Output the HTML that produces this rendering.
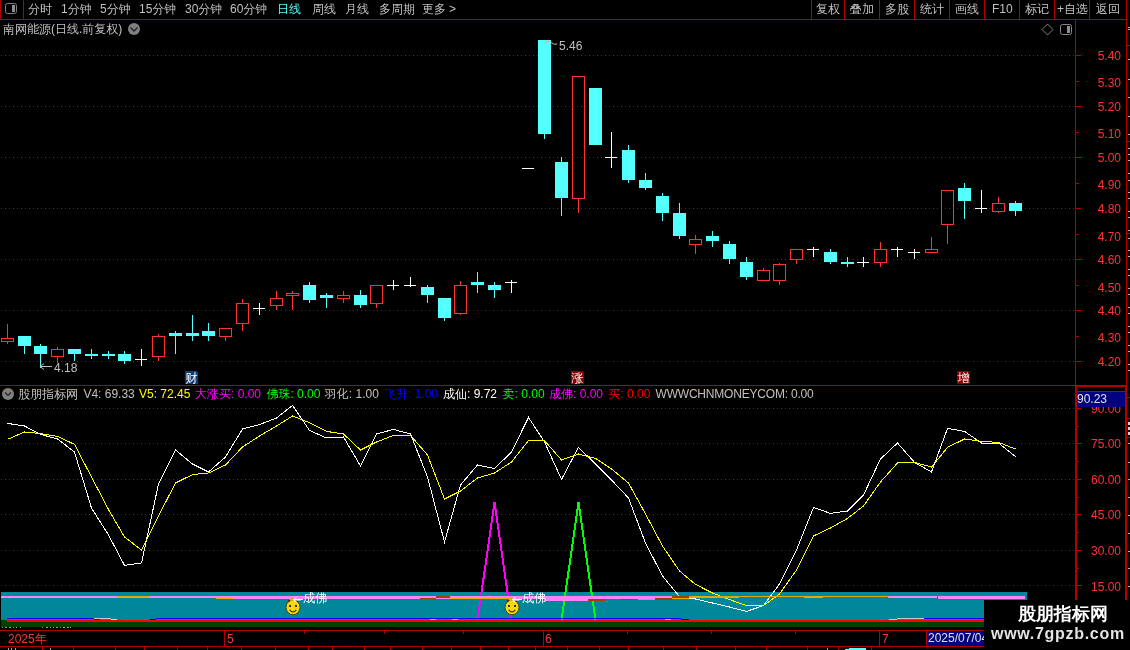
<!DOCTYPE html>
<html><head><meta charset="utf-8"><title>南网能源</title>
<style>
html,body{margin:0;padding:0;background:#000;}
body{width:1130px;height:650px;overflow:hidden;position:relative;font-family:"Liberation Sans","WenQuanYi Zen Hei Sharp","WenQuanYi Zen Hei","Noto Sans CJK SC",sans-serif;}
.ov{position:absolute;left:0;top:0;}
.t,.n{position:absolute;white-space:nowrap;line-height:14px;height:14px;}
.n{font-family:"Liberation Sans",sans-serif;}
</style></head><body>
<svg class="ov" width="1130" height="650" viewBox="0 0 1130 650" shape-rendering="crispEdges">
<line x1="1" y1="55.5" x2="1074" y2="55.5" stroke="#b00000" stroke-width="1" stroke-dasharray="1 3"/>
<line x1="1" y1="106.5" x2="1074" y2="106.5" stroke="#b00000" stroke-width="1" stroke-dasharray="1 3"/>
<line x1="1" y1="157.5" x2="1074" y2="157.5" stroke="#b00000" stroke-width="1" stroke-dasharray="1 3"/>
<line x1="1" y1="208.5" x2="1074" y2="208.5" stroke="#b00000" stroke-width="1" stroke-dasharray="1 3"/>
<line x1="1" y1="259.5" x2="1074" y2="259.5" stroke="#b00000" stroke-width="1" stroke-dasharray="1 3"/>
<line x1="1" y1="310.5" x2="1074" y2="310.5" stroke="#b00000" stroke-width="1" stroke-dasharray="1 3"/>
<line x1="1" y1="361.5" x2="1074" y2="361.5" stroke="#b00000" stroke-width="1" stroke-dasharray="1 3"/>
<line x1="1" y1="408.5" x2="1074" y2="408.5" stroke="#b00000" stroke-width="1" stroke-dasharray="1 3"/>
<line x1="1" y1="443.5" x2="1074" y2="443.5" stroke="#b00000" stroke-width="1" stroke-dasharray="1 3"/>
<line x1="1" y1="479.5" x2="1074" y2="479.5" stroke="#b00000" stroke-width="1" stroke-dasharray="1 3"/>
<line x1="1" y1="514.5" x2="1074" y2="514.5" stroke="#b00000" stroke-width="1" stroke-dasharray="1 3"/>
<line x1="1" y1="550.5" x2="1074" y2="550.5" stroke="#b00000" stroke-width="1" stroke-dasharray="1 3"/>
<line x1="1" y1="585.5" x2="1074" y2="585.5" stroke="#b00000" stroke-width="1" stroke-dasharray="1 3"/>
<rect x="1.5" y="338.5" width="12" height="3" fill="none" stroke="#ff3232" stroke-width="1"/>
<rect x="7" y="324" width="1" height="14" fill="#ff3232"/>
<rect x="7" y="342" width="1" height="2" fill="#ff3232"/>
<rect x="18" y="336" width="13" height="10" fill="#54ffff"/>
<rect x="24" y="346" width="1" height="8" fill="#54ffff"/>
<rect x="34" y="346" width="13" height="8" fill="#54ffff"/>
<rect x="40" y="344" width="1" height="2" fill="#54ffff"/>
<rect x="40" y="354" width="1" height="14" fill="#54ffff"/>
<rect x="51.5" y="349.5" width="12" height="7" fill="none" stroke="#ff3232" stroke-width="1"/>
<rect x="57" y="347" width="1" height="2" fill="#ff3232"/>
<rect x="57" y="357" width="1" height="6" fill="#ff3232"/>
<rect x="68" y="349" width="13" height="5" fill="#54ffff"/>
<rect x="74" y="354" width="1" height="7" fill="#54ffff"/>
<rect x="85" y="354" width="13" height="2" fill="#54ffff"/>
<rect x="91" y="349" width="1" height="10" fill="#54ffff"/>
<rect x="102" y="354" width="13" height="2" fill="#54ffff"/>
<rect x="108" y="351" width="1" height="8" fill="#54ffff"/>
<rect x="118" y="354" width="13" height="7" fill="#54ffff"/>
<rect x="124" y="351" width="1" height="3" fill="#54ffff"/>
<rect x="124" y="361" width="1" height="3" fill="#54ffff"/>
<rect x="135" y="359" width="12" height="1" fill="#fff"/>
<rect x="141" y="349" width="1" height="17" fill="#fff"/>
<rect x="152.5" y="336.5" width="12" height="20" fill="none" stroke="#ff3232" stroke-width="1"/>
<rect x="158" y="334" width="1" height="2" fill="#ff3232"/>
<rect x="158" y="357" width="1" height="4" fill="#ff3232"/>
<rect x="169" y="333" width="13" height="3" fill="#54ffff"/>
<rect x="175" y="331" width="1" height="2" fill="#54ffff"/>
<rect x="175" y="336" width="1" height="18" fill="#54ffff"/>
<rect x="186" y="333" width="13" height="3" fill="#54ffff"/>
<rect x="192" y="315" width="1" height="18" fill="#54ffff"/>
<rect x="192" y="336" width="1" height="5" fill="#54ffff"/>
<rect x="202" y="331" width="13" height="5" fill="#54ffff"/>
<rect x="208" y="323" width="1" height="8" fill="#54ffff"/>
<rect x="208" y="336" width="1" height="5" fill="#54ffff"/>
<rect x="219.5" y="328.5" width="12" height="8" fill="none" stroke="#ff3232" stroke-width="1"/>
<rect x="225" y="337" width="1" height="4" fill="#ff3232"/>
<rect x="236.5" y="303.5" width="12" height="20" fill="none" stroke="#ff3232" stroke-width="1"/>
<rect x="242" y="299" width="1" height="4" fill="#ff3232"/>
<rect x="242" y="324" width="1" height="7" fill="#ff3232"/>
<rect x="253" y="308" width="12" height="1" fill="#fff"/>
<rect x="259" y="303" width="1" height="12" fill="#fff"/>
<rect x="270.5" y="298.5" width="12" height="7" fill="none" stroke="#ff3232" stroke-width="1"/>
<rect x="276" y="291" width="1" height="7" fill="#ff3232"/>
<rect x="276" y="306" width="1" height="4" fill="#ff3232"/>
<rect x="286.5" y="293.5" width="12" height="2" fill="none" stroke="#ff3232" stroke-width="1"/>
<rect x="292" y="291" width="1" height="2" fill="#ff3232"/>
<rect x="292" y="296" width="1" height="14" fill="#ff3232"/>
<rect x="303" y="285" width="13" height="15" fill="#54ffff"/>
<rect x="309" y="282" width="1" height="3" fill="#54ffff"/>
<rect x="309" y="300" width="1" height="3" fill="#54ffff"/>
<rect x="320" y="295" width="13" height="3" fill="#54ffff"/>
<rect x="326" y="293" width="1" height="2" fill="#54ffff"/>
<rect x="326" y="298" width="1" height="10" fill="#54ffff"/>
<rect x="337.5" y="295.5" width="12" height="3" fill="none" stroke="#ff3232" stroke-width="1"/>
<rect x="343" y="291" width="1" height="4" fill="#ff3232"/>
<rect x="343" y="299" width="1" height="4" fill="#ff3232"/>
<rect x="354" y="295" width="13" height="10" fill="#54ffff"/>
<rect x="360" y="290" width="1" height="5" fill="#54ffff"/>
<rect x="360" y="305" width="1" height="3" fill="#54ffff"/>
<rect x="370.5" y="285.5" width="12" height="18" fill="none" stroke="#ff3232" stroke-width="1"/>
<rect x="376" y="304" width="1" height="4" fill="#ff3232"/>
<rect x="387" y="285" width="12" height="1" fill="#fff"/>
<rect x="393" y="280" width="1" height="10" fill="#fff"/>
<rect x="404" y="285" width="12" height="1" fill="#fff"/>
<rect x="410" y="277" width="1" height="10" fill="#fff"/>
<rect x="421" y="287" width="13" height="8" fill="#54ffff"/>
<rect x="427" y="285" width="1" height="2" fill="#54ffff"/>
<rect x="427" y="295" width="1" height="8" fill="#54ffff"/>
<rect x="438" y="298" width="13" height="20" fill="#54ffff"/>
<rect x="444" y="318" width="1" height="3" fill="#54ffff"/>
<rect x="454.5" y="285.5" width="12" height="28" fill="none" stroke="#ff3232" stroke-width="1"/>
<rect x="460" y="281" width="1" height="4" fill="#ff3232"/>
<rect x="460" y="314" width="1" height="1" fill="#ff3232"/>
<rect x="471" y="282" width="13" height="3" fill="#54ffff"/>
<rect x="477" y="272" width="1" height="10" fill="#54ffff"/>
<rect x="477" y="285" width="1" height="8" fill="#54ffff"/>
<rect x="488" y="285" width="13" height="5" fill="#54ffff"/>
<rect x="494" y="282" width="1" height="3" fill="#54ffff"/>
<rect x="494" y="290" width="1" height="8" fill="#54ffff"/>
<rect x="505" y="282" width="12" height="1" fill="#fff"/>
<rect x="511" y="280" width="1" height="13" fill="#fff"/>
<rect x="522" y="168" width="12" height="1" fill="#fff"/>
<rect x="538" y="40" width="13" height="94" fill="#54ffff"/>
<rect x="544" y="134" width="1" height="5" fill="#54ffff"/>
<rect x="555" y="162" width="13" height="36" fill="#54ffff"/>
<rect x="561" y="157" width="1" height="5" fill="#54ffff"/>
<rect x="561" y="198" width="1" height="18" fill="#54ffff"/>
<rect x="572.5" y="76.5" width="12" height="122" fill="none" stroke="#ff3232" stroke-width="1"/>
<rect x="578" y="199" width="1" height="14" fill="#ff3232"/>
<rect x="589" y="88" width="13" height="57" fill="#54ffff"/>
<rect x="605" y="157" width="12" height="1" fill="#fff"/>
<rect x="611" y="132" width="1" height="36" fill="#fff"/>
<rect x="622" y="150" width="13" height="30" fill="#54ffff"/>
<rect x="628" y="145" width="1" height="5" fill="#54ffff"/>
<rect x="628" y="180" width="1" height="3" fill="#54ffff"/>
<rect x="639" y="180" width="13" height="8" fill="#54ffff"/>
<rect x="645" y="173" width="1" height="7" fill="#54ffff"/>
<rect x="645" y="188" width="1" height="2" fill="#54ffff"/>
<rect x="656" y="196" width="13" height="17" fill="#54ffff"/>
<rect x="662" y="193" width="1" height="3" fill="#54ffff"/>
<rect x="662" y="213" width="1" height="8" fill="#54ffff"/>
<rect x="673" y="213" width="13" height="23" fill="#54ffff"/>
<rect x="679" y="203" width="1" height="10" fill="#54ffff"/>
<rect x="679" y="236" width="1" height="3" fill="#54ffff"/>
<rect x="689.5" y="239.5" width="12" height="5" fill="none" stroke="#ff3232" stroke-width="1"/>
<rect x="695" y="235" width="1" height="4" fill="#ff3232"/>
<rect x="695" y="245" width="1" height="9" fill="#ff3232"/>
<rect x="706" y="236" width="13" height="5" fill="#54ffff"/>
<rect x="712" y="231" width="1" height="5" fill="#54ffff"/>
<rect x="712" y="241" width="1" height="6" fill="#54ffff"/>
<rect x="723" y="244" width="13" height="15" fill="#54ffff"/>
<rect x="729" y="241" width="1" height="3" fill="#54ffff"/>
<rect x="729" y="259" width="1" height="5" fill="#54ffff"/>
<rect x="740" y="262" width="13" height="15" fill="#54ffff"/>
<rect x="746" y="257" width="1" height="5" fill="#54ffff"/>
<rect x="746" y="277" width="1" height="3" fill="#54ffff"/>
<rect x="757.5" y="270.5" width="12" height="10" fill="none" stroke="#ff3232" stroke-width="1"/>
<rect x="763" y="268" width="1" height="2" fill="#ff3232"/>
<rect x="773.5" y="264.5" width="12" height="16" fill="none" stroke="#ff3232" stroke-width="1"/>
<rect x="779" y="263" width="1" height="1" fill="#ff3232"/>
<rect x="779" y="281" width="1" height="4" fill="#ff3232"/>
<rect x="790.5" y="249.5" width="12" height="10" fill="none" stroke="#ff3232" stroke-width="1"/>
<rect x="796" y="260" width="1" height="4" fill="#ff3232"/>
<rect x="807" y="249" width="12" height="1" fill="#fff"/>
<rect x="813" y="247" width="1" height="10" fill="#fff"/>
<rect x="824" y="252" width="13" height="10" fill="#54ffff"/>
<rect x="830" y="249" width="1" height="3" fill="#54ffff"/>
<rect x="830" y="262" width="1" height="2" fill="#54ffff"/>
<rect x="841" y="262" width="13" height="2" fill="#54ffff"/>
<rect x="847" y="257" width="1" height="10" fill="#54ffff"/>
<rect x="857" y="262" width="12" height="1" fill="#fff"/>
<rect x="863" y="257" width="1" height="10" fill="#fff"/>
<rect x="874.5" y="249.5" width="12" height="13" fill="none" stroke="#ff3232" stroke-width="1"/>
<rect x="880" y="242" width="1" height="7" fill="#ff3232"/>
<rect x="880" y="263" width="1" height="4" fill="#ff3232"/>
<rect x="891" y="249" width="12" height="1" fill="#fff"/>
<rect x="897" y="247" width="1" height="10" fill="#fff"/>
<rect x="908" y="252" width="12" height="1" fill="#fff"/>
<rect x="914" y="249" width="1" height="10" fill="#fff"/>
<rect x="925.5" y="249.5" width="12" height="3" fill="none" stroke="#ff3232" stroke-width="1"/>
<rect x="931" y="237" width="1" height="12" fill="#ff3232"/>
<rect x="941.5" y="190.5" width="12" height="34" fill="none" stroke="#ff3232" stroke-width="1"/>
<rect x="947" y="225" width="1" height="19" fill="#ff3232"/>
<rect x="958" y="188" width="13" height="13" fill="#54ffff"/>
<rect x="964" y="183" width="1" height="5" fill="#54ffff"/>
<rect x="964" y="201" width="1" height="18" fill="#54ffff"/>
<rect x="975" y="208" width="12" height="1" fill="#fff"/>
<rect x="981" y="190" width="1" height="23" fill="#fff"/>
<rect x="992.5" y="203.5" width="12" height="8" fill="none" stroke="#ff3232" stroke-width="1"/>
<rect x="998" y="197" width="1" height="6" fill="#ff3232"/>
<rect x="998" y="212" width="1" height="1" fill="#ff3232"/>
<rect x="1009" y="203" width="13" height="8" fill="#54ffff"/>
<rect x="1015" y="201" width="1" height="2" fill="#54ffff"/>
<rect x="1015" y="211" width="1" height="5" fill="#54ffff"/>
<rect x="1" y="592" width="1026" height="28" fill="#00889a"/>
<rect x="1" y="622" width="1075" height="5" fill="#004000"/>
<polyline points="7.5,423.4 24.5,426.0 40.5,434.4 57.5,439.0 74.5,452.0 91.5,508.0 108.5,535.0 124.5,565.4 141.5,563.0 158.5,484.0 175.5,450.0 192.5,464.0 208.5,472.0 225.5,457.0 242.5,429.0 259.5,424.6 276.5,418.0 292.5,405.4 309.5,430.4 326.5,438.0 343.5,437.0 360.5,466.0 376.5,434.0 393.5,429.4 410.5,434.0 427.5,477.0 444.5,542.0 460.5,485.0 477.5,465.0 494.5,468.6 511.5,452.0 528.5,417.4 544.5,442.0 561.5,479.4 578.5,447.4 595.5,464.0 611.5,480.0 628.5,498.0 645.5,543.0 662.5,576.0 679.5,596.6 695.5,599.0 712.5,603.0 729.5,607.0 746.5,611.4 763.5,605.6 779.5,584.0 796.5,550.0 813.5,507.4 830.5,513.4 847.5,511.0 863.5,495.0 880.5,459.0 897.5,443.0 914.5,462.4 931.5,472.0 947.5,428.4 964.5,431.4 981.5,443.0 998.5,443.0 1015.5,456.6" fill="none" stroke="#ffffff" stroke-width="1"/>
<polyline points="7.5,439.4 24.5,432.0 40.5,433.6 57.5,436.4 74.5,444.4 91.5,477.0 108.5,509.5 124.5,537.0 141.5,550.0 158.5,516.0 175.5,483.0 192.5,474.6 208.5,473.0 225.5,465.0 242.5,447.0 259.5,436.0 276.5,426.0 292.5,416.0 309.5,422.6 326.5,431.4 343.5,434.0 360.5,450.0 376.5,442.0 393.5,435.4 410.5,435.4 427.5,455.0 444.5,499.0 460.5,491.0 477.5,478.0 494.5,473.0 511.5,462.0 528.5,440.6 544.5,440.6 561.5,460.0 578.5,454.0 595.5,458.4 611.5,469.0 628.5,483.0 645.5,514.0 662.5,546.0 679.5,571.0 695.5,584.4 712.5,593.0 729.5,599.6 746.5,605.6 763.5,605.6 779.5,594.0 796.5,570.0 813.5,536.0 830.5,528.0 847.5,518.4 863.5,506.0 880.5,482.0 897.5,463.0 914.5,462.4 931.5,467.0 947.5,447.4 964.5,439.0 981.5,441.4 998.5,442.4 1015.5,449.0" fill="none" stroke="#ffff00" stroke-width="1"/>
<polyline points="477.5,620 494.5,502.5 511.5,620" fill="none" stroke="#ff00ff" stroke-width="2"/>
<polyline points="561.5,620 578.5,502.5 595.5,620" fill="none" stroke="#00ff00" stroke-width="2"/>
<rect x="1" y="596" width="215" height="2" fill="#ff80ff"/>
<rect x="216" y="596" width="456" height="3" fill="#ff80ff"/>
<rect x="117" y="596" width="32" height="2" fill="#e6a800"/>
<rect x="216" y="598" width="17" height="1" fill="#e6a800"/>
<rect x="420" y="598" width="16" height="1" fill="#a04000"/>
<rect x="436" y="596" width="14" height="2" fill="#a04000"/>
<rect x="450" y="598" width="60" height="1" fill="#e6a800"/>
<rect x="545" y="596" width="24" height="5" fill="#ff80ff"/>
<rect x="569" y="599" width="19" height="2" fill="#ff80ff"/>
<rect x="588" y="599" width="17" height="2" fill="#a04000"/>
<rect x="621" y="599" width="17" height="1" fill="#a04000"/>
<rect x="638" y="599" width="17" height="1" fill="#e6a800"/>
<rect x="655" y="598" width="17" height="2" fill="#a04000"/>
<rect x="672" y="596" width="17" height="2" fill="#a04000"/>
<rect x="672" y="598" width="17" height="1" fill="#e6a800"/>
<rect x="689" y="596" width="50" height="2" fill="#e6a800"/>
<rect x="739" y="596" width="149" height="1" fill="#e6a800"/>
<rect x="804" y="596" width="19" height="2" fill="#e6a800"/>
<rect x="888" y="596" width="49" height="2" fill="#ff80ff"/>
<rect x="938" y="596" width="87" height="3" fill="#ff80ff"/>
<rect x="7" y="618" width="87" height="1" fill="#0000ff"/>
<rect x="156" y="618" width="525" height="1" fill="#0000ff"/>
<rect x="681" y="619" width="8" height="1" fill="#0000ff"/>
<rect x="94" y="618" width="17" height="1" fill="#c8c8c8"/>
<rect x="94" y="619" width="6" height="1" fill="#0000ff"/>
<rect x="111" y="619" width="6" height="1" fill="#ffc8e8"/>
<rect x="150" y="619" width="6" height="1" fill="#0000ff"/>
<rect x="430" y="619" width="6" height="1" fill="#ff80ff"/>
<rect x="452" y="619" width="6" height="1" fill="#ff80ff"/>
<rect x="665" y="619" width="6" height="1" fill="#ff80ff"/>
<rect x="889" y="619" width="8" height="1" fill="#c8c8c8"/>
<rect x="897" y="618" width="27" height="1" fill="#c8c8c8"/>
<rect x="924" y="618" width="60" height="1" fill="#0000ff"/>
<rect x="7" y="620" width="1069" height="2" fill="#ff0000"/>
<rect x="1" y="620" width="6" height="2" fill="#004000"/>
<rect x="0" y="19" width="1127" height="1" fill="#b00000"/>
<rect x="0" y="0" width="1" height="20" fill="#b00000"/>
<rect x="23" y="0" width="1" height="20" fill="#b00000"/>
<rect x="811" y="0" width="1" height="20" fill="#b00000"/>
<rect x="844" y="0" width="1" height="20" fill="#b00000"/>
<rect x="879" y="0" width="1" height="20" fill="#b00000"/>
<rect x="914" y="0" width="1" height="20" fill="#b00000"/>
<rect x="949" y="0" width="1" height="20" fill="#b00000"/>
<rect x="984" y="0" width="1" height="20" fill="#b00000"/>
<rect x="1019" y="0" width="1" height="20" fill="#b00000"/>
<rect x="1054" y="0" width="1" height="20" fill="#b00000"/>
<rect x="1089" y="0" width="1" height="20" fill="#b00000"/>
<rect x="1126" y="0" width="1" height="650" fill="#b00000"/>
<rect x="1075" y="20" width="1" height="365" fill="#b00000"/>
<rect x="1075" y="385" width="2" height="245" fill="#b00000"/>
<rect x="0" y="385" width="1075" height="1" fill="#b00000"/>
<rect x="1075" y="385" width="52" height="2" fill="#b00000"/>
<rect x="1077" y="391" width="48" height="1" fill="#b00000"/>
<rect x="1125" y="385" width="2" height="265" fill="#b00000"/>
<rect x="0" y="630" width="984" height="1" fill="#b00000"/>
<rect x="0" y="646" width="984" height="1" fill="#b00000"/>
<rect x="224" y="630" width="1" height="16" fill="#b00000"/>
<rect x="543" y="630" width="1" height="16" fill="#b00000"/>
<rect x="879" y="630" width="1" height="16" fill="#b00000"/>
<rect x="926" y="630" width="1" height="16" fill="#b00000"/>
<rect x="304" y="631" width="1" height="3" fill="#b00000"/>
<rect x="384" y="631" width="1" height="3" fill="#b00000"/>
<rect x="463" y="631" width="1" height="3" fill="#b00000"/>
<rect x="627" y="631" width="1" height="3" fill="#b00000"/>
<rect x="711" y="631" width="1" height="3" fill="#b00000"/>
<rect x="795" y="631" width="1" height="3" fill="#b00000"/>
<rect x="42" y="646" width="1" height="4" fill="#b00000"/>
<rect x="73" y="646" width="1" height="4" fill="#b00000"/>
<rect x="115" y="646" width="1" height="4" fill="#b00000"/>
<rect x="144" y="646" width="1" height="4" fill="#b00000"/>
<rect x="177" y="646" width="1" height="4" fill="#b00000"/>
<rect x="207" y="646" width="1" height="4" fill="#b00000"/>
<rect x="241" y="646" width="1" height="4" fill="#b00000"/>
<rect x="275" y="646" width="1" height="4" fill="#b00000"/>
<rect x="308" y="646" width="1" height="4" fill="#b00000"/>
<rect x="332" y="646" width="1" height="4" fill="#b00000"/>
<rect x="364" y="646" width="1" height="4" fill="#b00000"/>
<rect x="390" y="646" width="1" height="4" fill="#b00000"/>
<rect x="422" y="646" width="1" height="4" fill="#b00000"/>
<rect x="451" y="646" width="1" height="4" fill="#b00000"/>
<rect x="480" y="646" width="1" height="4" fill="#b00000"/>
<rect x="508" y="646" width="1" height="4" fill="#b00000"/>
<rect x="535" y="646" width="1" height="4" fill="#b00000"/>
<rect x="567" y="646" width="1" height="4" fill="#b00000"/>
<rect x="599" y="646" width="1" height="4" fill="#b00000"/>
<rect x="628" y="646" width="1" height="4" fill="#b00000"/>
<rect x="663" y="646" width="1" height="4" fill="#b00000"/>
<rect x="696" y="646" width="1" height="4" fill="#b00000"/>
<rect x="735" y="646" width="1" height="4" fill="#b00000"/>
<rect x="766" y="646" width="1" height="4" fill="#b00000"/>
<rect x="807" y="646" width="1" height="4" fill="#b00000"/>
<rect x="838" y="646" width="1" height="4" fill="#b00000"/>
<rect x="871" y="646" width="1" height="4" fill="#b00000"/>
<rect x="1076" y="55" width="5" height="1" fill="#b00000"/>
<rect x="1076" y="81" width="3" height="1" fill="#b00000"/>
<rect x="1076" y="106" width="5" height="1" fill="#b00000"/>
<rect x="1076" y="132" width="3" height="1" fill="#b00000"/>
<rect x="1076" y="157" width="5" height="1" fill="#b00000"/>
<rect x="1076" y="183" width="3" height="1" fill="#b00000"/>
<rect x="1076" y="208" width="5" height="1" fill="#b00000"/>
<rect x="1076" y="234" width="3" height="1" fill="#b00000"/>
<rect x="1076" y="259" width="5" height="1" fill="#b00000"/>
<rect x="1076" y="285" width="3" height="1" fill="#b00000"/>
<rect x="1076" y="310" width="5" height="1" fill="#b00000"/>
<rect x="1076" y="336" width="3" height="1" fill="#b00000"/>
<rect x="1076" y="361" width="5" height="1" fill="#b00000"/>
<rect x="1077" y="408" width="4" height="1" fill="#b00000"/>
<rect x="1077" y="426" width="2" height="1" fill="#b00000"/>
<rect x="1077" y="443" width="4" height="1" fill="#b00000"/>
<rect x="1077" y="461" width="2" height="1" fill="#b00000"/>
<rect x="1077" y="479" width="4" height="1" fill="#b00000"/>
<rect x="1077" y="497" width="2" height="1" fill="#b00000"/>
<rect x="1077" y="514" width="4" height="1" fill="#b00000"/>
<rect x="1077" y="532" width="2" height="1" fill="#b00000"/>
<rect x="1077" y="550" width="4" height="1" fill="#b00000"/>
<rect x="1077" y="568" width="2" height="1" fill="#b00000"/>
<rect x="1077" y="585" width="4" height="1" fill="#b00000"/>
<rect x="1077" y="603" width="2" height="1" fill="#b00000"/>
<rect x="1127" y="45" width="3" height="1" fill="#b00000"/>
<rect x="1127" y="141" width="3" height="1" fill="#b00000"/>
<rect x="1127" y="233" width="3" height="1" fill="#b00000"/>
<rect x="1127" y="397" width="3" height="1" fill="#b00000"/>
<rect x="1127" y="418" width="3" height="1" fill="#b00000"/>
<rect x="1127" y="437" width="3" height="1" fill="#b00000"/>
<rect x="1128" y="27" width="2" height="1" fill="#b0b0b0"/>
<rect x="1128" y="29" width="2" height="1" fill="#b0b0b0"/>
<rect x="1128" y="59" width="2" height="1" fill="#b0b0b0"/>
<rect x="1128" y="79" width="2" height="1" fill="#b0b0b0"/>
<rect x="1128" y="97" width="2" height="1" fill="#b0b0b0"/>
<rect x="1128" y="116" width="2" height="1" fill="#b0b0b0"/>
<rect x="1128" y="134" width="2" height="1" fill="#b0b0b0"/>
<rect x="1128" y="148" width="2" height="1" fill="#b0b0b0"/>
<rect x="1128" y="154" width="2" height="1" fill="#b0b0b0"/>
<rect x="1128" y="160" width="2" height="1" fill="#b0b0b0"/>
<rect x="1128" y="173" width="2" height="1" fill="#b0b0b0"/>
<rect x="1128" y="180" width="2" height="1" fill="#b0b0b0"/>
<rect x="1128" y="192" width="2" height="1" fill="#b0b0b0"/>
<rect x="1128" y="198" width="2" height="1" fill="#b0b0b0"/>
<rect x="1128" y="211" width="2" height="1" fill="#b0b0b0"/>
<rect x="1128" y="217" width="2" height="1" fill="#b0b0b0"/>
<rect x="1128" y="230" width="2" height="1" fill="#b0b0b0"/>
<rect x="1128" y="238" width="2" height="1" fill="#b0b0b0"/>
<rect x="1128" y="250" width="2" height="1" fill="#b0b0b0"/>
<rect x="1128" y="256" width="2" height="1" fill="#b0b0b0"/>
<rect x="1128" y="269" width="2" height="1" fill="#b0b0b0"/>
<rect x="1128" y="275" width="2" height="1" fill="#b0b0b0"/>
<rect x="1128" y="288" width="2" height="1" fill="#b0b0b0"/>
<rect x="1128" y="294" width="2" height="1" fill="#b0b0b0"/>
<rect x="1128" y="307" width="2" height="1" fill="#b0b0b0"/>
<rect x="1128" y="313" width="2" height="1" fill="#b0b0b0"/>
<rect x="1128" y="326" width="2" height="1" fill="#b0b0b0"/>
<rect x="1128" y="332" width="2" height="1" fill="#b0b0b0"/>
<rect x="1128" y="345" width="2" height="1" fill="#b0b0b0"/>
<rect x="1128" y="351" width="2" height="1" fill="#b0b0b0"/>
<rect x="1128" y="364" width="2" height="1" fill="#b0b0b0"/>
<rect x="1128" y="370" width="2" height="1" fill="#b0b0b0"/>
<rect x="1128" y="443" width="2" height="1" fill="#b0b0b0"/>
<rect x="1128" y="462" width="2" height="1" fill="#b0b0b0"/>
<rect x="1128" y="479" width="2" height="1" fill="#b0b0b0"/>
<rect x="1128" y="497" width="2" height="1" fill="#b0b0b0"/>
<rect x="1128" y="515" width="2" height="1" fill="#b0b0b0"/>
<rect x="1128" y="533" width="2" height="1" fill="#b0b0b0"/>
<rect x="1128" y="551" width="2" height="1" fill="#b0b0b0"/>
<rect x="1128" y="568" width="2" height="1" fill="#b0b0b0"/>
<rect x="1128" y="586" width="2" height="1" fill="#b0b0b0"/>
<rect x="1128" y="422" width="2" height="13" fill="#d0d0d0"/>
<rect x="1128" y="425" width="2" height="2" fill="#000"/>
<rect x="1128" y="430" width="2" height="2" fill="#000"/>
<rect x="927" y="631" width="57" height="15" fill="#000080"/>
<rect x="984" y="600" width="146" height="50" fill="#000"/>
<rect x="2" y="627" width="1" height="1" fill="#a0a0a0"/>
<rect x="5" y="627" width="2" height="1" fill="#a0a0a0"/>
<rect x="9" y="627" width="2" height="1" fill="#a0a0a0"/>
<rect x="13" y="627" width="1" height="1" fill="#a0a0a0"/>
<rect x="16" y="627" width="1" height="1" fill="#a0a0a0"/>
<rect x="20" y="627" width="1" height="1" fill="#a0a0a0"/>
<rect x="42" y="627" width="1" height="1" fill="#a0a0a0"/>
<rect x="46" y="627" width="2" height="1" fill="#a0a0a0"/>
<rect x="50" y="627" width="1" height="1" fill="#a0a0a0"/>
<rect x="53" y="627" width="1" height="1" fill="#a0a0a0"/>
<rect x="56" y="627" width="2" height="1" fill="#a0a0a0"/>
<rect x="60" y="627" width="1" height="1" fill="#a0a0a0"/>
<rect x="63" y="627" width="2" height="1" fill="#a0a0a0"/>
<rect x="67" y="627" width="2" height="1" fill="#a0a0a0"/>
<rect x="70" y="627" width="1" height="1" fill="#a0a0a0"/>
<rect x="8" y="648" width="1" height="2" fill="#a0a0a0"/>
<rect x="11" y="648" width="1" height="2" fill="#a0a0a0"/>
<rect x="15" y="648" width="1" height="2" fill="#a0a0a0"/>
<rect x="50" y="648" width="1" height="2" fill="#a0a0a0"/>
<rect x="849" y="648" width="17" height="2" fill="#54ffff"/>
<rect x="845" y="649" width="4" height="1" fill="#54ffff"/>
<rect x="827" y="648" width="1" height="2" fill="#a0a0a0"/>
</svg>

<svg class="ov" width="1130" height="650" viewBox="0 0 1130 650">
<rect x="5.5" y="3.5" width="11" height="10" rx="2" fill="none" stroke="#808080"/><rect x="12" y="5" width="3" height="7" fill="#909090"/>
<rect x="1060.5" y="24.5" width="11" height="10" rx="2" fill="none" stroke="#888"/><rect x="1067" y="26" width="3" height="7" fill="#909090"/>
<path d="M1047.5 24 L1053 29.5 L1047.5 35 L1042 29.5 Z" fill="none" stroke="#909090" stroke-width="0.9"/>
<circle cx="134" cy="29" r="6" fill="#808080"/><path d="M130.5 27.5 L134 31 L137.5 27.5" fill="none" stroke="#202020" stroke-width="1.3"/>
<circle cx="8" cy="394" r="6" fill="#808080"/><path d="M5 392.5 L8 395.5 L11 392.5" fill="none" stroke="#202020" stroke-width="1.2"/>
<path d="M40 366.5 H52 M40 366.5 l4 -3 M40 366.5 l4 3" stroke="#c0c0c0" fill="none"/>
<path d="M545 42 l4 -2 M545 42 l3 3 M545 42 q5 -1 7 1 t5 1" stroke="#c0c0c0" fill="none"/>
<g><ellipse cx="293" cy="607.3" rx="7" ry="7.4" fill="#f6d80c" stroke="#4a3800" stroke-width="0.9"/><path d="M288 601.5 Q293 597 298 601.5" fill="none" stroke="#3a2c00" stroke-width="1.6"/><ellipse cx="292" cy="599.6" rx="2.6" ry="1.3" fill="#e0b800"/><rect x="289" y="605" width="2" height="2" fill="#3a2c00"/><rect x="295" y="605" width="2" height="2" fill="#3a2c00"/><path d="M289.7 609.8 Q293 614 296.3 609.8" fill="none" stroke="#3a2c00" stroke-width="1.1"/></g>
<g transform="translate(219,0)"><ellipse cx="293" cy="607.3" rx="7" ry="7.4" fill="#f6d80c" stroke="#4a3800" stroke-width="0.9"/><path d="M288 601.5 Q293 597 298 601.5" fill="none" stroke="#3a2c00" stroke-width="1.6"/><ellipse cx="292" cy="599.6" rx="2.6" ry="1.3" fill="#e0b800"/><rect x="289" y="605" width="2" height="2" fill="#3a2c00"/><rect x="295" y="605" width="2" height="2" fill="#3a2c00"/><path d="M289.7 609.8 Q293 614 296.3 609.8" fill="none" stroke="#3a2c00" stroke-width="1.1"/></g>
<path d="M293.5 599.5 H303 M293.5 599.5 l3 -2.5 M293.5 599.5 l3 2.5" stroke="#fff" fill="none"/><path d="M512.5 599.5 H522 M512.5 599.5 l3 -2.5 M512.5 599.5 l3 2.5" stroke="#fff" fill="none"/>
</svg>
<div id="tx" style="position:absolute;left:0;top:0;width:1130px;height:650px;will-change:transform"><div class="t" style="left:28px;top:2px;color:#c0c0c0;font-size:12px;">分时</div><div class="t" style="left:61px;top:2px;color:#c0c0c0;font-size:12px;">1分钟</div><div class="t" style="left:100px;top:2px;color:#c0c0c0;font-size:12px;">5分钟</div><div class="t" style="left:139px;top:2px;color:#c0c0c0;font-size:12px;">15分钟</div><div class="t" style="left:185px;top:2px;color:#c0c0c0;font-size:12px;">30分钟</div><div class="t" style="left:230px;top:2px;color:#c0c0c0;font-size:12px;">60分钟</div><div class="t" style="left:277px;top:2px;color:#54ffff;font-size:12px;">日线</div><div class="t" style="left:312px;top:2px;color:#c0c0c0;font-size:12px;">周线</div><div class="t" style="left:345px;top:2px;color:#c0c0c0;font-size:12px;">月线</div><div class="t" style="left:379px;top:2px;color:#c0c0c0;font-size:12px;">多周期</div><div class="t" style="left:422px;top:2px;color:#c0c0c0;font-size:12px;">更多</div><div class="t" style="left:449px;top:2px;color:#c0c0c0;font-size:12px;">&gt;</div><div class="t" style="left:816px;top:2px;color:#c0c0c0;font-size:12px;">复权</div><div class="t" style="left:850px;top:2px;color:#c0c0c0;font-size:12px;">叠加</div><div class="t" style="left:885px;top:2px;color:#c0c0c0;font-size:12px;">多股</div><div class="t" style="left:920px;top:2px;color:#c0c0c0;font-size:12px;">统计</div><div class="t" style="left:955px;top:2px;color:#c0c0c0;font-size:12px;">画线</div><div class="t" style="left:992px;top:2px;color:#c0c0c0;font-size:12px;">F10</div><div class="t" style="left:1025px;top:2px;color:#c0c0c0;font-size:12px;">标记</div><div class="t" style="left:1057px;top:2px;color:#c0c0c0;font-size:12px;">+自选</div><div class="t" style="left:1096px;top:2px;color:#c0c0c0;font-size:12px;">返回</div><div class="t" style="left:3px;top:22px;color:#c0c0c0;font-size:12px;">南网能源(日线.前复权)</div><div class="n" style="left:1091px;top:49px;color:#ff3232;font-size:12px;width:30px;text-align:right;">5.40</div><div class="n" style="left:1091px;top:76px;color:#ff3232;font-size:12px;width:30px;text-align:right;">5.30</div><div class="n" style="left:1091px;top:100px;color:#ff3232;font-size:12px;width:30px;text-align:right;">5.20</div><div class="n" style="left:1091px;top:127px;color:#ff3232;font-size:12px;width:30px;text-align:right;">5.10</div><div class="n" style="left:1091px;top:151px;color:#ff3232;font-size:12px;width:30px;text-align:right;">5.00</div><div class="n" style="left:1091px;top:178px;color:#ff3232;font-size:12px;width:30px;text-align:right;">4.90</div><div class="n" style="left:1091px;top:202px;color:#ff3232;font-size:12px;width:30px;text-align:right;">4.80</div><div class="n" style="left:1091px;top:230px;color:#ff3232;font-size:12px;width:30px;text-align:right;">4.70</div><div class="n" style="left:1091px;top:253px;color:#ff3232;font-size:12px;width:30px;text-align:right;">4.60</div><div class="n" style="left:1091px;top:281px;color:#ff3232;font-size:12px;width:30px;text-align:right;">4.50</div><div class="n" style="left:1091px;top:304px;color:#ff3232;font-size:12px;width:30px;text-align:right;">4.40</div><div class="n" style="left:1091px;top:331px;color:#ff3232;font-size:12px;width:30px;text-align:right;">4.30</div><div class="n" style="left:1091px;top:355px;color:#ff3232;font-size:12px;width:30px;text-align:right;">4.20</div><div class="n" style="left:1091px;top:402px;color:#ff3232;font-size:12px;width:30px;text-align:right;">90.00</div><div class="n" style="left:1091px;top:437px;color:#ff3232;font-size:12px;width:30px;text-align:right;">75.00</div><div class="n" style="left:1091px;top:473px;color:#ff3232;font-size:12px;width:30px;text-align:right;">60.00</div><div class="n" style="left:1091px;top:508px;color:#ff3232;font-size:12px;width:30px;text-align:right;">45.00</div><div class="n" style="left:1091px;top:544px;color:#ff3232;font-size:12px;width:30px;text-align:right;">30.00</div><div class="n" style="left:1091px;top:580px;color:#ff3232;font-size:12px;width:30px;text-align:right;">15.00</div><div class="n" style="left:559px;top:39px;color:#c0c0c0;font-size:12px;">5.46</div><div class="n" style="left:54px;top:361px;color:#c0c0c0;font-size:12px;">4.18</div><div class="t" style="left:185px;top:371px;width:13px;height:13px;line-height:15px;background:#103c78;color:#fff;font-size:12px;text-align:center;overflow:hidden;clip-path:polygon(0 0,12px 0,12px 1px,13px 1px,13px 13px,0 13px)">财</div><div class="t" style="left:571px;top:371px;width:13px;height:13px;line-height:15px;background:#8c0000;color:#fff;font-size:12px;text-align:center;overflow:hidden;clip-path:polygon(0 0,12px 0,12px 1px,13px 1px,13px 13px,0 13px)">涨</div><div class="t" style="left:957px;top:371px;width:13px;height:13px;line-height:15px;background:#8c0000;color:#fff;font-size:12px;text-align:center;overflow:hidden;clip-path:polygon(0 0,12px 0,12px 1px,13px 1px,13px 13px,0 13px)">增</div><div class="t" style="left:18px;top:387px;color:#c0c0c0;font-size:12px;">股朋指标网</div><div class="t" style="left:83.4px;top:387px;color:#c0c0c0;font-size:12px;">V4: 69.33</div><div class="t" style="left:139px;top:387px;color:#ffff00;font-size:12px;">V5: 72.45</div><div class="t" style="left:195px;top:387px;color:#ff00ff;font-size:12px;">大涨买: 0.00</div><div class="t" style="left:266.4px;top:387px;color:#00ff00;font-size:12px;">佛珠: 0.00</div><div class="t" style="left:324.8px;top:387px;color:#c0c0c0;font-size:12px;">羽化: 1.00</div><div class="t" style="left:384px;top:387px;color:#0000ff;font-size:12px;">飞升: 1.00</div><div class="t" style="left:443px;top:387px;color:#ffffff;font-size:12px;">成仙: 9.72</div><div class="t" style="left:502.6px;top:387px;color:#00ff00;font-size:12px;">卖: 0.00</div><div class="t" style="left:549px;top:387px;color:#ff00ff;font-size:12px;">成佛: 0.00</div><div class="t" style="left:608.3px;top:387px;color:#ff0000;font-size:12px;">买: 0.00</div><div class="t" style="left:655.5px;top:387px;color:#c0c0c0;font-size:12px;letter-spacing:-0.2px;">WWWCHNMONEYCOM: 0.00</div><div class="n" style="left:1077px;top:392px;color:#e0e0e0;font-size:12px;width:48px;height:15px;line-height:15px;background:#000080;">90.23</div><div class="t" style="left:291px;top:591px;color:#fff;font-size:12px;">←成佛</div><div class="t" style="left:510px;top:591px;color:#fff;font-size:12px;">←成佛</div><div class="t" style="left:8px;top:632px;color:#ff3232;font-size:12px;">2025年</div><div class="t" style="left:227px;top:632px;color:#ff3232;font-size:12px;">5</div><div class="t" style="left:545px;top:632px;color:#ff3232;font-size:12px;">6</div><div class="t" style="left:882px;top:632px;color:#ff3232;font-size:12px;">7</div><div class="n" style="left:928px;top:631px;color:#e0e0e0;font-size:12px;width:56px;overflow:hidden;">2025/07/04</div><div class="t" style="left:1018px;top:602px;color:#fff;font-size:18px;font-weight:900;line-height:24px;height:24px;font-family:"Liberation Sans","Noto Sans CJK SC",sans-serif;letter-spacing:-0.2px;">股朋指标网</div><div class="n" style="left:991px;top:623px;color:#e4e4e4;font-size:16px;font-weight:bold;line-height:22px;height:22px;letter-spacing:0.7px;">www.7gpzb.com</div></div>
</body></html>
